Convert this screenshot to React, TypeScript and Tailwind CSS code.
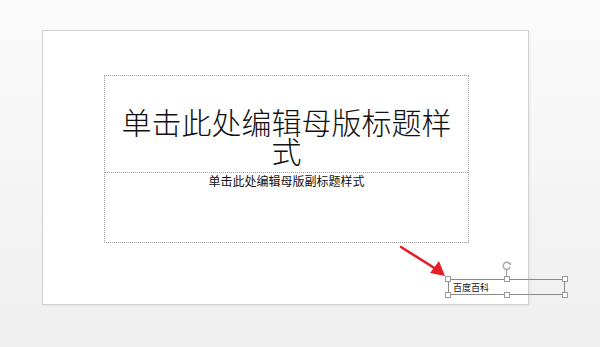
import React from 'react';

const cjk = { fontFamily: '"Noto Sans CJK SC", "Noto Sans", sans-serif' };

function Handle() {
  return <div className="w-[6px] h-[6px] bg-white border border-[#9a9a9a]" />;
}

function HandleRow({ className }: { className: string }) {
  return (
    <div className={`absolute -left-[4px] -right-[4px] flex justify-between ${className}`}>
      <Handle />
      <Handle />
      <Handle />
    </div>
  );
}

export default function App() {
  return (
    <div className="relative w-[600px] h-[347px] overflow-hidden bg-gradient-to-b from-[#fbfbfb] to-[#efefef]" style={cjk}>
      <div className="pt-[30px] pl-[42px]">
        <div className="relative w-[487px] h-[275px] bg-white border border-[#d2d2d2] shadow-[1px_1px_2px_rgba(0,0,0,0.06)]">
          <div className="ml-[61px] mt-[44px] w-[365px] h-[168px] flex flex-col border border-dotted border-[#9c9c9c]">
            <div className="h-[97px] flex flex-col justify-end items-center pb-[7px] border-b border-dotted border-[#9c9c9c]">
              <p className="text-[30px] font-light leading-[29px] text-center text-[#111] w-[340px]">单击此处编辑母版标题样式</p>
            </div>
            <div className="flex justify-center pt-[1px]">
              <p className="text-[12px] leading-[14px] text-[#111]">单击此处编辑母版副标题样式</p>
            </div>
          </div>

          {/* selected text box */}
          <div className="absolute left-[405px] top-[248px] w-[117px] h-[16px] border border-[#8a8a8a] flex items-center pl-[4px] pt-[1px]">
            <span className="text-[9px] leading-none text-[#111]">百度百科</span>
            <HandleRow className="-top-[4px]" />
            <HandleRow className="-bottom-[4px]" />
            <div className="absolute left-[57px] -top-[10px] w-px h-[6px] bg-[#a0a0a0]" />
            <svg className="absolute left-[53px] -top-[19px]" width="10" height="10" viewBox="0 0 10 10">
              <path d="M7.9 3 A3.6 3.6 0 1 0 8.2 6" fill="none" stroke="#a8a8a8" strokeWidth="1.4" />
              <path d="M6.2 2 L9.2 1.8 L8.4 4.8 Z" fill="#a8a8a8" />
            </svg>
          </div>
        </div>
      </div>

      {/* red arrow */}
      <svg className="absolute left-0 top-0" width="600" height="347" viewBox="0 0 600 347">
        <line x1="401" y1="247" x2="436" y2="269" stroke="#e41e26" strokeWidth="2.6" strokeLinecap="round" />
        <polygon points="445,276 430,273 439,261" fill="#e41e26" />
      </svg>
    </div>
  );
}
